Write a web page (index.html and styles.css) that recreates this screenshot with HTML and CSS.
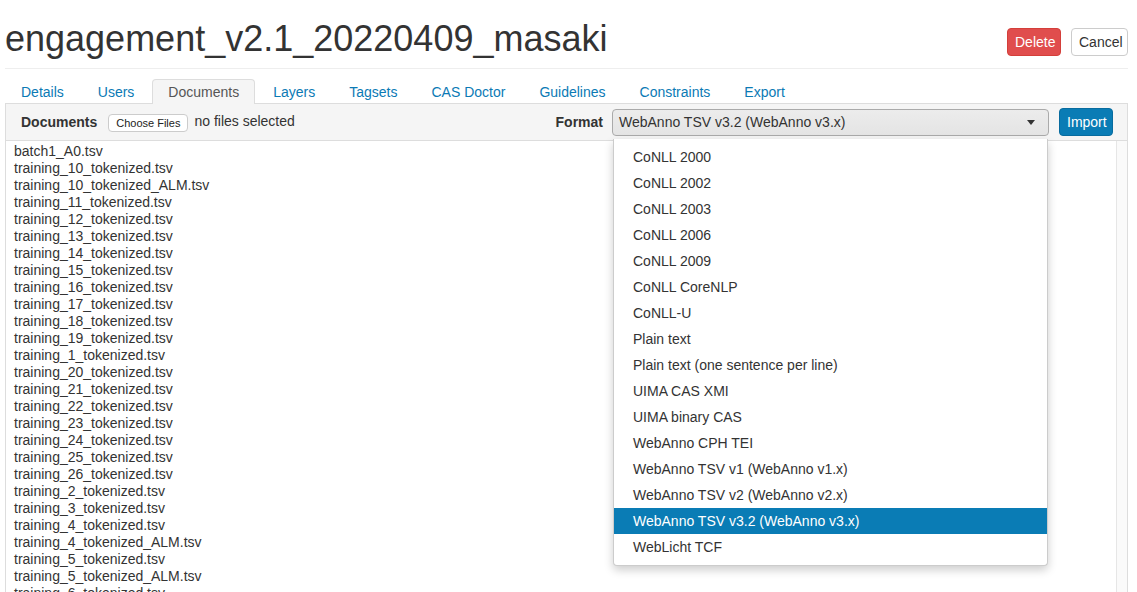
FILE: index.html
```html
<!DOCTYPE html>
<html>
<head>
<meta charset="utf-8">
<link rel="stylesheet" href="styles.css">
</head>
<body>
<div class="page">
  <div class="titlebar">
    <h1 class="title">engagement_v2.1_20220409_masaki</h1>
    <div class="actions">
      <button class="btn btn-danger">Delete</button>
      <button class="btn btn-default">Cancel</button>
    </div>
  </div>
  <ul class="tabs">
    <li class="tab">Details</li>
    <li class="tab">Users</li>
    <li class="tab active">Documents</li>
    <li class="tab">Layers</li>
    <li class="tab">Tagsets</li>
    <li class="tab">CAS Doctor</li>
    <li class="tab">Guidelines</li>
    <li class="tab">Constraints</li>
    <li class="tab">Export</li>
  </ul>
  <div class="panel">
    <div class="panel-head">
      <div class="upload">
        <span class="label">Documents</span>
        <span class="file-btn">Choose Files</span>
        <span class="file-text">no files selected</span>
      </div>
      <div class="format">
        <span class="label">Format</span>
        <div class="select-wrap">
          <div class="select">
            <span>WebAnno TSV v3.2 (WebAnno v3.x)</span>
            <span class="caret"></span>
          </div>
          <ul class="dropdown">
            <li>CoNLL 2000</li>
            <li>CoNLL 2002</li>
            <li>CoNLL 2003</li>
            <li>CoNLL 2006</li>
            <li>CoNLL 2009</li>
            <li>CoNLL CoreNLP</li>
            <li>CoNLL-U</li>
            <li>Plain text</li>
            <li>Plain text (one sentence per line)</li>
            <li>UIMA CAS XMI</li>
            <li>UIMA binary CAS</li>
            <li>WebAnno CPH TEI</li>
            <li>WebAnno TSV v1 (WebAnno v1.x)</li>
            <li>WebAnno TSV v2 (WebAnno v2.x)</li>
            <li class="selected">WebAnno TSV v3.2 (WebAnno v3.x)</li>
            <li>WebLicht TCF</li>
          </ul>
        </div>
        <button class="btn btn-primary">Import</button>
      </div>
    </div>
    <div class="listbox">
      <ul class="files">
        <li>batch1_A0.tsv</li>
        <li>training_10_tokenized.tsv</li>
        <li>training_10_tokenized_ALM.tsv</li>
        <li>training_11_tokenized.tsv</li>
        <li>training_12_tokenized.tsv</li>
        <li>training_13_tokenized.tsv</li>
        <li>training_14_tokenized.tsv</li>
        <li>training_15_tokenized.tsv</li>
        <li>training_16_tokenized.tsv</li>
        <li>training_17_tokenized.tsv</li>
        <li>training_18_tokenized.tsv</li>
        <li>training_19_tokenized.tsv</li>
        <li>training_1_tokenized.tsv</li>
        <li>training_20_tokenized.tsv</li>
        <li>training_21_tokenized.tsv</li>
        <li>training_22_tokenized.tsv</li>
        <li>training_23_tokenized.tsv</li>
        <li>training_24_tokenized.tsv</li>
        <li>training_25_tokenized.tsv</li>
        <li>training_26_tokenized.tsv</li>
        <li>training_2_tokenized.tsv</li>
        <li>training_3_tokenized.tsv</li>
        <li>training_4_tokenized.tsv</li>
        <li>training_4_tokenized_ALM.tsv</li>
        <li>training_5_tokenized.tsv</li>
        <li>training_5_tokenized_ALM.tsv</li>
        <li>training_6_tokenized.tsv</li>
      </ul>
      <div class="scrolltrack"></div>
    </div>
  </div>
</div>
</body>
</html>
```
FILE: styles.css
```css
* { box-sizing: border-box; }
html, body {
  margin: 0;
  padding: 0;
  background: #fff;
  font-family: "Liberation Sans", Arial, Helvetica, sans-serif;
  color: #333;
  overflow: hidden;
  height: 592px;
}
.page {
  padding: 0 9px 0 5px;
}
.titlebar {
  display: flex;
  justify-content: space-between;
  align-items: flex-start;
  border-bottom: 1px solid #eee;
  height: 69px;
}
.title {
  margin: 17px 0 0 0;
  font-size: 36px;
  font-weight: normal;
  line-height: 44px;
  color: #333;
  letter-spacing: 0;
}
.actions {
  display: flex;
  gap: 10px;
  margin-top: 28px;
}
.btn {
  font-family: "Liberation Sans", Arial, sans-serif;
  font-size: 14px;
  height: 28px;
  border-radius: 4px;
  padding: 0 7px;
  border: 1px solid transparent;
  line-height: 26px;
  cursor: pointer;
}
.btn-danger {
  background: #e04d4d;
  border-color: #d43f3a;
  color: #fff;
  width: 54px;
}
.btn-default {
  background: #fff;
  border-color: #ccc;
  color: #333;
  width: 57px;
}
.btn-primary {
  background: #0a7cb5;
  border-color: #086c9f;
  color: #fff;
  width: 54px;
  height: 28px;
}
.tabs {
  list-style: none;
  margin: 10px 0 0 0;
  padding: 0;
  display: flex;
  height: 24px;
}
.tab {
  padding: 0 15px;
  margin-right: 2px;
  font-size: 14px;
  line-height: 24px;
  color: #0b7ab5;
  border: 1px solid transparent;
  border-bottom: none;
  border-radius: 4px 4px 0 0;
}
.tab.active {
  background: #f5f5f5;
  border-color: #ddd;
  color: #555;
  position: relative;
  z-index: 2;
  height: 25px;
}
.panel {
  border: 1px solid #ddd;
  width: 1123px;
}
.panel-head {
  background: #f5f5f5;
  border-bottom: 1px solid #ddd;
  display: flex;
  justify-content: space-between;
  align-items: center;
  height: 37px;
  padding: 0 14px 0 15px;
}
.upload {
  display: flex;
  align-items: center;
}
.label {
  font-weight: bold;
  font-size: 14px;
  color: #333;
}
.file-btn {
  margin-left: 11px;
  font-size: 11px;
  border: 1px solid #ccc;
  background: #fff;
  border-radius: 4px;
  height: 18px;
  line-height: 16px;
  padding: 0 7px;
  color: #222;
  display: inline-block;
  margin-top: 2px;
}
.file-text {
  margin-left: 6px;
  font-size: 14px;
  color: #333;
  margin-top: -3px;
}
.format {
  display: flex;
  align-items: center;
}
.format .label {
  margin-right: 9px;
  margin-left: -1px;
}
.select-wrap {
  position: relative;
  margin-right: 10px;
}
.select {
  width: 437px;
  height: 27px;
  border: 1px solid #aaa;
  border-radius: 4px;
  background: linear-gradient(#ececec, #e4e4e4);
  display: flex;
  justify-content: space-between;
  align-items: center;
  padding: 0 13px 0 6px;
  font-size: 14px;
  color: #333;
}
.caret {
  width: 0;
  height: 0;
  border-left: 4px solid transparent;
  border-right: 4px solid transparent;
  border-top: 5px solid #333;
}
.dropdown {
  position: absolute;
  left: 1px;
  top: 30px;
  width: 435px;
  margin: 0;
  padding: 5px 0;
  list-style: none;
  background: #fff;
  border: 1px solid #ccc;
  border-top: none;
  border-radius: 0 0 4px 4px;
  box-shadow: 0 4px 10px rgba(0, 0, 0, 0.2);
  z-index: 10;
}
.dropdown li {
  height: 26px;
  line-height: 26px;
  padding-left: 19px;
  font-size: 14px;
  color: #333;
}
.dropdown li.selected {
  background: #0a7cb5;
  color: #fff;
}
.listbox {
  display: flex;
  height: 460px;
  background: #fff;
}
.files {
  flex: 1;
  list-style: none;
  margin: 0;
  padding: 2px 0 0 8px;
}
.files li {
  font-size: 14px;
  line-height: 17px;
  height: 17px;
  color: #333;
}
.scrolltrack {
  width: 11px;
  background: #fafafa;
  border-left: 1px solid #e6e6e6;
}
```
